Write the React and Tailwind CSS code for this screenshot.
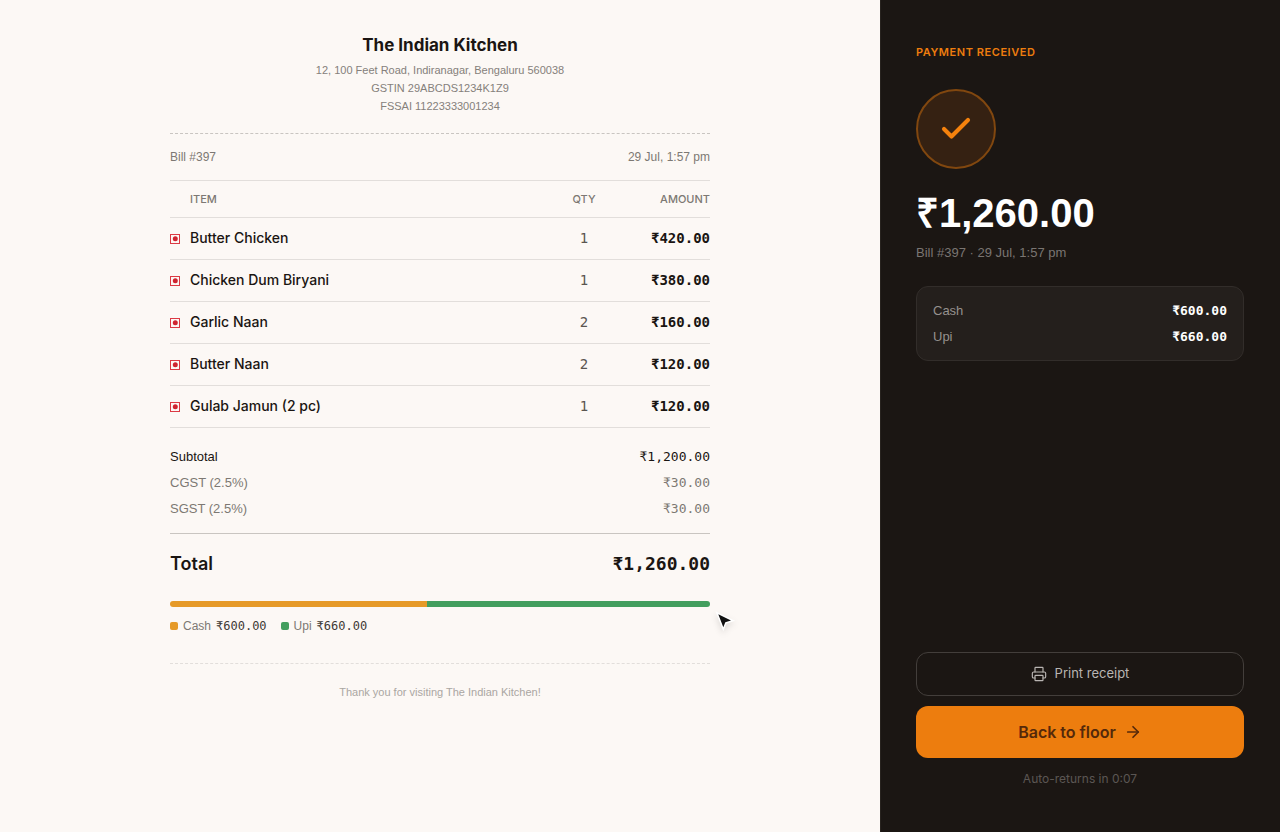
import { ArrowRight, Check, Printer } from 'lucide-react';

const items = [
  { name: 'Butter Chicken', qty: 1, amount: '₹420.00' },
  { name: 'Chicken Dum Biryani', qty: 1, amount: '₹380.00' },
  { name: 'Garlic Naan', qty: 2, amount: '₹160.00' },
  { name: 'Butter Naan', qty: 2, amount: '₹120.00' },
  { name: 'Gulab Jamun (2 pc)', qty: 1, amount: '₹120.00' },
];

const taxes = [
  { label: 'CGST (2.5%)', amount: '₹30.00' },
  { label: 'SGST (2.5%)', amount: '₹30.00' },
];

const payments = [
  { label: 'Cash', value: 600, amount: '₹600.00', color: 'bg-[#e69a28]' },
  { label: 'Upi', value: 660, amount: '₹660.00', color: 'bg-[#439e5e]' },
];

const paid = payments.reduce((sum, p) => sum + p.value, 0);

function Mono({ className = '', children }) {
  return (
    <span className={`block font-['DejaVu_Sans_Mono','Liberation_Mono',monospace] ${className}`}>
      {children}
    </span>
  );
}

function NonVegMark() {
  return (
    <svg className="block size-2.5" viewBox="0 0 10 10" role="img" aria-label="Non-veg">
      <rect x="0.5" y="0.5" width="9" height="9" fill="none" stroke="#dc3a44" />
      <circle cx="5.3" cy="4.7" r="2.5" fill="#cf2530" />
    </svg>
  );
}

function Pointer() {
  return (
    <svg
      className="absolute left-full top-2 ml-1 drop-shadow-md"
      width="24"
      height="24"
      viewBox="0 0 24 24"
      aria-hidden="true"
    >
      <path
        d="M4.3 5.3 L17 11.4 L11.3 13.3 L9.3 18.2 Z"
        fill="#111"
        stroke="#fff"
        strokeWidth="3"
        paintOrder="stroke"
      />
    </svg>
  );
}

function Receipt() {
  return (
    <article className="w-full max-w-[540px]">
      <header className="border-b border-dashed border-[#c9c5c1] pb-[18px] text-center">
        <h1 className="font-['Inter',sans-serif] text-[17px]/[26px] font-bold text-[#1a1512]">
          The Indian Kitchen
        </h1>
        <div className="mt-[3px] text-[11px]/[18px] text-[#85807b]">
          <p>12, 100 Feet Road, Indiranagar, Bengaluru 560038</p>
          <p>GSTIN 29ABCDS1234K1Z9</p>
          <p>FSSAI 11223333001234</p>
        </div>
      </header>

      <div className="flex justify-between py-3.5 text-xs/[18px] text-[#7d7873]">
        <span>Bill #397</span>
        <span>29 Jul, 1:57 pm</span>
      </div>

      {/* Ordered items */}
      <table className="w-full border-separate border-spacing-0 border-t border-[#e2dedb]">
        <thead>
          <tr className="h-[37px] font-['Inter',sans-serif] text-[11px] text-[#7d7873]">
            <th className="w-5 border-b border-[#e2dedb]" aria-label="Type" />
            <th className="border-b border-[#e2dedb] text-left font-medium">ITEM</th>
            <th className="w-14 border-b border-[#e2dedb] text-center font-medium">QTY</th>
            <th className="w-[98px] border-b border-[#e2dedb] text-right font-medium">AMOUNT</th>
          </tr>
        </thead>
        <tbody>
          {items.map((item) => (
            <tr key={item.name} className="h-[42px] text-sm text-[#1a1512]">
              <td className="border-b border-[#e2dedb]">
                <NonVegMark />
              </td>
              <td className="border-b border-[#e2dedb] pb-0.5 font-['Inter',sans-serif] font-medium">
                {item.name}
              </td>
              <td className="border-b border-[#e2dedb] pb-0.5 text-center text-[#5a5550]">
                <Mono>{item.qty}</Mono>
              </td>
              <td className="border-b border-[#e2dedb] pb-0.5 text-right">
                <Mono className="font-bold">{item.amount}</Mono>
              </td>
            </tr>
          ))}
        </tbody>
      </table>

      {/* Totals */}
      <dl className="flex flex-col gap-1.5 border-b border-[#c9c5c1] pt-[19px] pb-3.5 text-[13px]/5 text-[#7d7873]">
        <div className="flex justify-between text-[#1a1512]">
          <dt>Subtotal</dt>
          <dd>
            <Mono>₹1,200.00</Mono>
          </dd>
        </div>
        {taxes.map((tax) => (
          <div key={tax.label} className="flex justify-between">
            <dt>{tax.label}</dt>
            <dd>
              <Mono>{tax.amount}</Mono>
            </dd>
          </div>
        ))}
      </dl>
      <div className="flex justify-between pt-4 font-['Inter',sans-serif] text-lg/7 font-semibold text-[#1a1512]">
        <span>Total</span>
        <Mono className="font-bold">₹1,260.00</Mono>
      </div>

      {/* Payment split */}
      <div className="relative mt-[23px]">
        <div className="flex h-1.5 overflow-hidden rounded-full">
          {payments.map((p) => (
            <div key={p.label} className={p.color} style={{ width: `${(p.value / paid) * 100}%` }} />
          ))}
        </div>
        <Pointer />
      </div>
      <ul className="mt-2.5 flex gap-3.5 text-xs/[18px] text-[#7d7873]">
        {payments.map((p) => (
          <li key={p.label} className="flex items-center gap-[5px]">
            <span className={`size-2 rounded-xs ${p.color}`} />
            <span>{p.label}</span>
            <Mono className="text-[#3f3a36]">{p.amount}</Mono>
          </li>
        ))}
      </ul>

      <footer className="mt-7 border-t border-dashed border-[#e2dedb] pt-5 text-center text-[11px]/4 text-[#aaa6a2]">
        Thank you for visiting The Indian Kitchen!
      </footer>
    </article>
  );
}

function PaymentPanel() {
  return (
    <aside className="flex w-[400px] shrink-0 flex-col bg-[#1b1613] px-9 py-11 shadow-[inset_1px_0_0_#28231f]">
      <h2 className="font-['Inter',sans-serif] text-[11px]/[17px] font-semibold tracking-wider text-[#ed7d0e]">
        PAYMENT RECEIVED
      </h2>

      <div className="mt-7 flex size-20 items-center justify-center rounded-full border-2 border-[#81470f] bg-[#352112]">
        <Check className="size-9 text-[#f5820d]" strokeWidth={2.75} />
      </div>

      <p className="mt-[22px] text-[40px]/[44px] font-bold text-white">₹1,260.00</p>
      <p className="mt-2 text-[13px]/5 text-[#7a7572]">Bill #397 · 29 Jul, 1:57 pm</p>

      <dl className="mt-[23px] flex flex-col gap-[7px] rounded-xl border border-[#322d2a] bg-[#241f1c] px-4 py-3.5 text-[13px]/[19px]">
        {payments.map((p) => (
          <div key={p.label} className="flex justify-between">
            <dt className="text-[#96918e]">{p.label}</dt>
            <dd className="text-white">
              <Mono className="font-bold">{p.amount}</Mono>
            </dd>
          </div>
        ))}
      </dl>

      <div className="mt-auto flex flex-col gap-2.5 pt-10 font-['Inter',sans-serif]">
        <button
          type="button"
          className="flex h-11 items-center justify-center gap-2 rounded-xl border border-[#433e3b] text-[13px] text-[#b9b5b2]"
        >
          <Printer className="size-4" strokeWidth={1.75} />
          Print receipt
        </button>
        <button
          type="button"
          className="flex h-[52px] items-center justify-center gap-2 rounded-xl bg-[#ed7d0e] text-base font-semibold text-[#55290a]"
        >
          Back to floor
          <ArrowRight className="size-[18px]" strokeWidth={2.25} />
        </button>
        <p className="pt-0.5 text-center text-xs/[18px] text-[#5b5653]">Auto-returns in 0:07</p>
      </div>
    </aside>
  );
}

export default function App() {
  return (
    <div className="flex min-h-screen bg-[#fcf8f5] font-['Liberation_Sans',Arial,sans-serif]">
      <main className="flex flex-1 justify-center px-6 py-8">
        <Receipt />
      </main>
      <PaymentPanel />
    </div>
  );
}
